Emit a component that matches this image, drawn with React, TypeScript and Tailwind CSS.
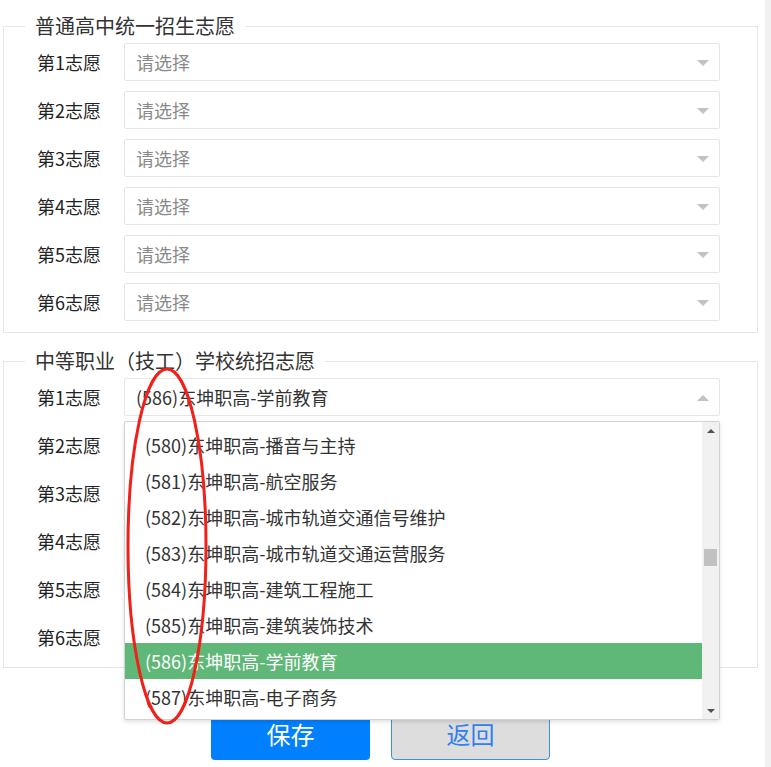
import type { ReactNode } from "react";

const majors = [
  "播音与主持",
  "航空服务",
  "城市轨道交通信号维护",
  "城市轨道交通运营服务",
  "建筑工程施工",
  "建筑装饰技术",
  "学前教育",
  "电子商务",
];

function Fieldset({ title, className, children }: { title: string; className: string; children: ReactNode }) {
  return (
    <fieldset className={`w-[755px] border border-[#e6e6e6] px-0 pt-[2px] pb-[11px] ${className}`}>
      <legend className="ml-[21px] px-[10px] text-[20px] leading-[30px] text-[#333]">{title}</legend>
      <div className="flex flex-col gap-[10px]">{children}</div>
    </fieldset>
  );
}

function Arrow({ up }: { up?: boolean }) {
  return (
    <span
      className={`absolute right-[10px] top-[16px] h-0 w-0 border-x-[6px] border-x-transparent ${
        up ? "border-b-[6px] border-b-[#c2c2c2]" : "border-t-[6px] border-t-[#c2c2c2]"
      }`}
    />
  );
}

function Row({ n, children }: { n: number; children?: ReactNode }) {
  return (
    <div className="flex items-center">
      <div className="w-[120px] pl-[33px] text-[18px] leading-[38px] text-[#222]">第{n}志愿</div>
      <div className="relative w-[596px]">{children ?? <Placeholder />}</div>
    </div>
  );
}

function Placeholder() {
  return (
    <div className="relative flex h-[38px] items-center rounded-[2px] border border-[#e6e6e6] pl-[11px] text-[18px] text-[#8a8a8a]">
      请选择
      <Arrow />
    </div>
  );
}

function OpenSelect() {
  return (
    <>
      <div className="relative flex h-[38px] items-center rounded-[2px] border border-[#e6e6e6] pl-[11px] text-[18px] text-[#333]">
        (586)东坤职高-学前教育
        <Arrow up />
      </div>
      <div className="absolute left-0 top-[43px] z-10 flex h-[299px] w-[596px] rounded-[2px] border border-[#d2d2d2] bg-white shadow-[0_2px_4px_rgba(0,0,0,0.12)]">
        <ul className="flex-1 overflow-hidden pt-[5px]">
          {majors.map((m, i) => (
            <li
              key={m}
              className={`flex h-[36px] items-center pl-[20px] text-[18px] ${
                i === 6 ? "bg-[#5fb878] text-white" : "text-[#333]"
              }`}
            >
              ({580 + i})东坤职高-{m}
            </li>
          ))}
        </ul>
        <div className="flex w-[17px] flex-col items-center bg-[#f1f1f1]">
          <span className="mt-[7px] h-0 w-0 border-x-[4px] border-b-[4px] border-x-transparent border-b-[#505050]" />
          <span className="mt-[116px] h-[17px] w-[13px] bg-[#c1c1c1]" />
          <span className="mt-auto mb-[6px] h-0 w-0 border-x-[4px] border-t-[4px] border-x-transparent border-t-[#505050]" />
        </div>
      </div>
    </>
  );
}

export default function App() {
  return (
    <div className="relative flex min-h-[767px] bg-white font-['Noto_Sans_CJK_SC',sans-serif]">
      <div className="flex-1 pl-[3px]">
        <Fieldset title="普通高中统一招生志愿" className="mt-[11px]">
          {[1, 2, 3, 4, 5, 6].map((n) => (
            <Row key={n} n={n} />
          ))}
        </Fieldset>
        <Fieldset title="中等职业（技工）学校统招志愿" className="mt-[13px]">
          {[1, 2, 3, 4, 5, 6].map((n) => (
            <Row key={n} n={n}>
              {n === 1 ? <OpenSelect /> : undefined}
            </Row>
          ))}
        </Fieldset>
        <div className="mt-[40px] flex w-[755px] justify-center gap-[21px]">
          <button className="h-[52px] w-[159px] rounded-[4px] bg-[#0080ff] text-[24px] leading-[48px] text-white">保存</button>
          <button className="h-[52px] w-[159px] rounded-[4px] border border-[#3a8ee6] bg-[#dddddd] text-[24px] leading-[48px] text-[#2f80f0]">
            返回
          </button>
        </div>
      </div>
      <div className="w-[6px] bg-[#f1f1f1]" />
      <svg className="pointer-events-none absolute left-0 top-0 z-20" width="771" height="767">
        <ellipse cx="167" cy="546" rx="39" ry="177" fill="none" stroke="#f0201a" strokeWidth="3" />
      </svg>
    </div>
  );
}
